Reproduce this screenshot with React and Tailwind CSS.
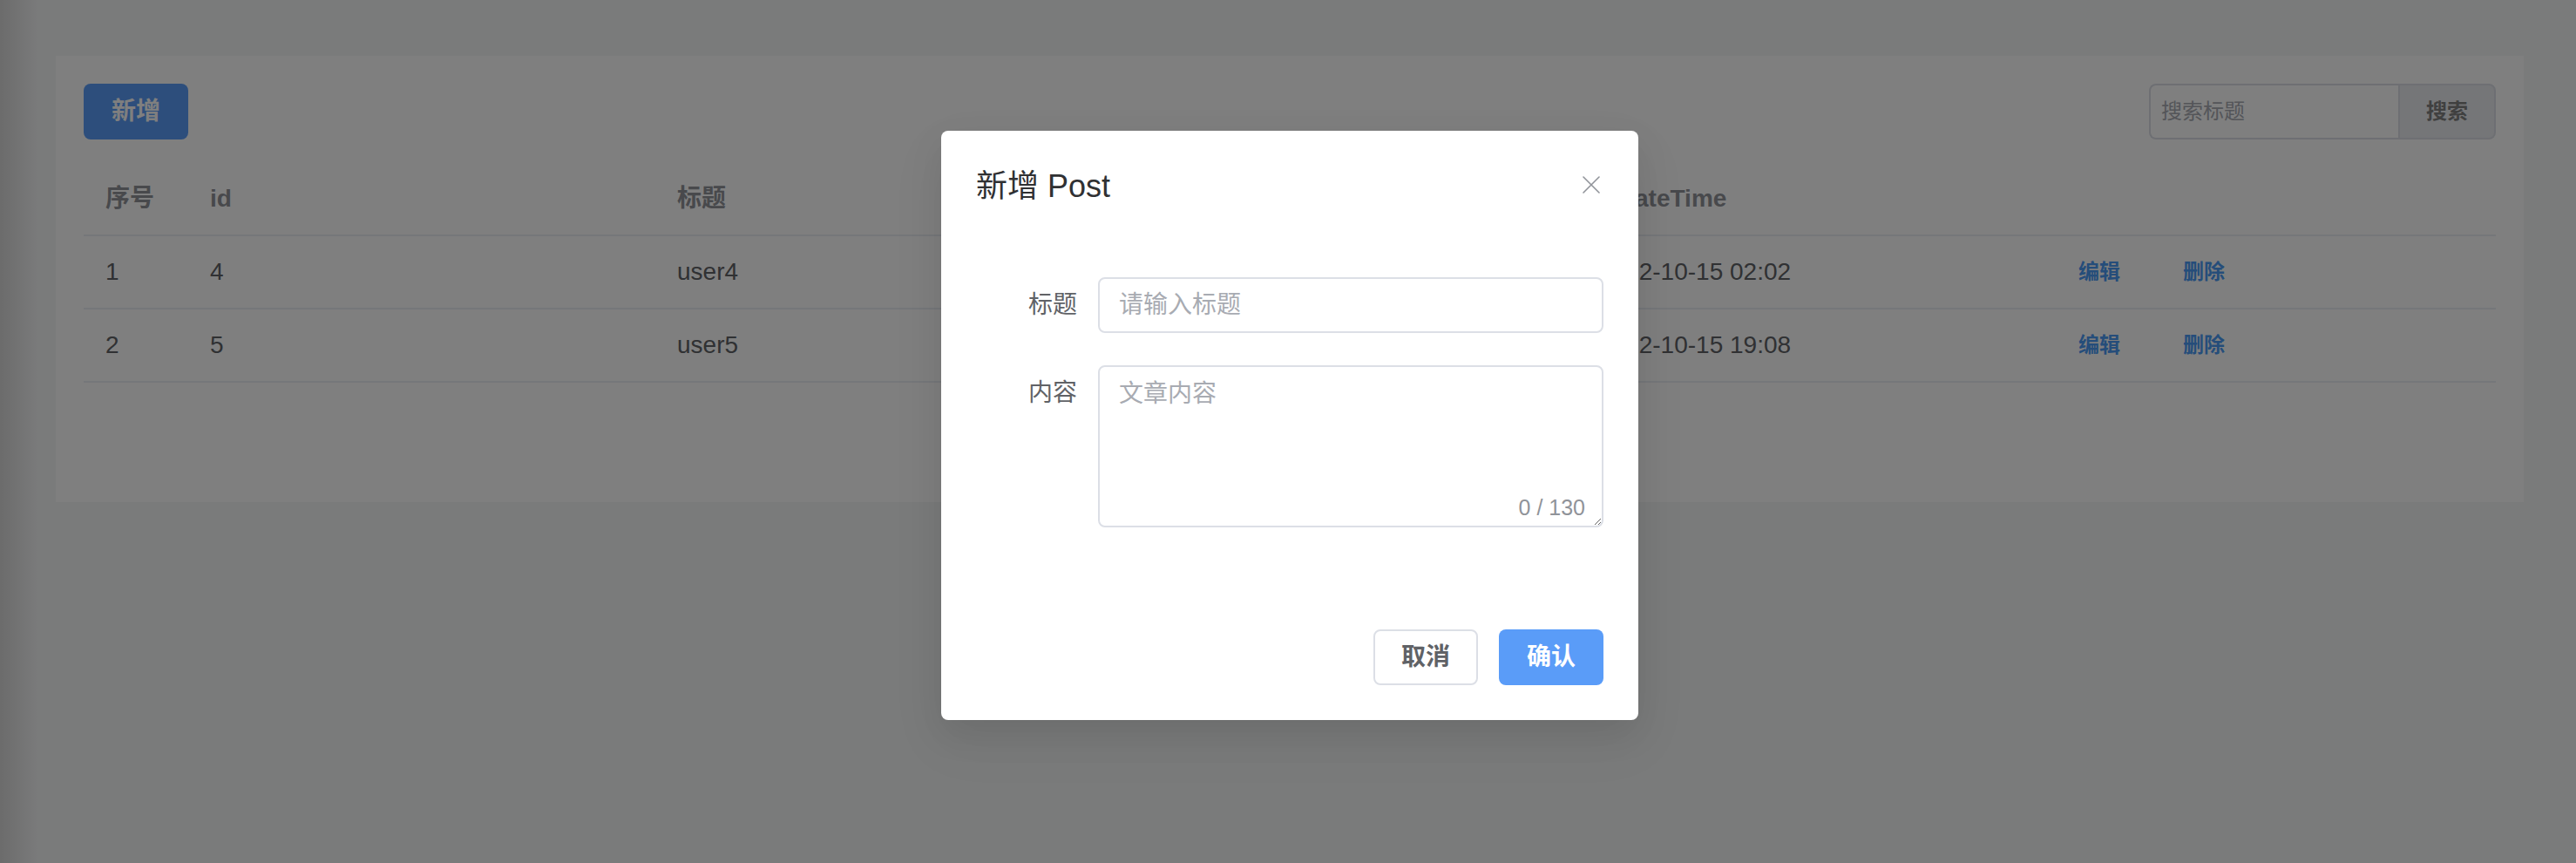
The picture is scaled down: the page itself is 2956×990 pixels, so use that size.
import React from "react";

const rows = [
  { no: 1, id: 4, title: "user4", content: "content4", createTime: "2022-10-15 02:02" },
  { no: 2, id: 5, title: "user5", content: "content5", createTime: "2022-10-15 19:08" },
];

const gridCols = "grid grid-cols-[120px_536px_536px_521px_551px_1fr]";

// thin X used by the dialog header
function CloseIcon() {
  return (
    <svg viewBox="0 0 20 20" className="h-[20px] w-[20px]" fill="none" stroke="#909399" strokeWidth="1.6" strokeLinecap="round">
      <path d="M1 1 L19 19 M19 1 L1 19" />
    </svg>
  );
}

function PostTable() {
  return (
    <div className="mt-[27px] text-[28px]">
      {/* header */}
      <div className={`${gridCols} h-[84px] items-center border-b-2 border-[#ebeef5] font-bold text-[#909399]`}>
        <div className="pl-[25px]">序号</div>
        <div className="pl-[25px]">id</div>
        <div className="pl-[25px]">标题</div>
        <div className="pl-[25px]">内容</div>
        <div className="pl-[25px]">createTime</div>
        <div className="pl-[25px]"></div>
      </div>

      {rows.map((row) => (
        <div key={row.id} className={`${gridCols} h-[84px] items-center border-b-2 border-[#ebeef5] text-[#606266]`}>
          <div className="pl-[25px]">{row.no}</div>
          <div className="pl-[25px]">{row.id}</div>
          <div className="pl-[25px]">{row.title}</div>
          <div className="pl-[25px]">{row.content}</div>
          <div className="pl-[25px]">{row.createTime}</div>
          <div className="flex items-center gap-[72px] pl-[25px] text-[24px] font-semibold text-[#4a9af5]">
            <span>编辑</span>
            <span>删除</span>
          </div>
        </div>
      ))}
    </div>
  );
}

function PostDialog() {
  return (
    <div className="absolute left-[1080px] top-[150px] flex h-[676px] w-[800px] flex-col rounded-[8px] bg-white px-[40px] pb-[40px] pt-[40px] shadow-[0_24px_64px_8px_rgba(0,0,0,0.04),0_16px_40px_rgba(0,0,0,0.08)]">
      <div className="flex items-start justify-between">
        <h2 className="text-[36px] leading-[48px] text-[#303133]">新增 Post</h2>
        <button className="mr-[4px] mt-[12px]">
          <CloseIcon />
        </button>
      </div>

      {/* form */}
      <div className="mt-[80px]">
        <div className="flex">
          <label className="w-[140px] pr-[24px] text-right text-[28px] leading-[64px] text-[#606266]">标题</label>
          <input
            type="text"
            placeholder="请输入标题"
            className="h-[64px] w-[580px] rounded-[8px] border-2 border-[#dcdfe6] px-[22px] text-[28px] text-[#606266] outline-none placeholder:text-[#a8abb2]"
          />
        </div>
        <div className="mt-[37px] flex">
          <label className="w-[140px] pr-[24px] text-right text-[28px] leading-[64px] text-[#606266]">内容</label>
          <div className="relative">
            <textarea
              placeholder="文章内容"
              className="block h-[186px] w-[580px] rounded-[8px] border-2 border-[#dcdfe6] px-[22px] py-[10px] text-[28px] leading-[42px] text-[#606266] outline-none placeholder:text-[#a8abb2]"
            />
            <span className="absolute bottom-[7px] right-[21px] bg-white text-[25px] leading-[32px] text-[#909399]">0 / 130</span>
          </div>
        </div>
      </div>

      {/* footer */}
      <div className="mt-auto flex justify-end gap-[24px]">
        <button className="h-[64px] w-[120px] rounded-[8px] border-2 border-[#dcdfe6] bg-white text-[28px] font-semibold text-[#606266]">
          取消
        </button>
        <button className="h-[64px] w-[120px] rounded-[8px] bg-[#5a9cf8] text-[28px] font-semibold text-white">
          确认
        </button>
      </div>
    </div>
  );
}

export default function App() {
  return (
    <div className="relative h-[990px] w-full overflow-hidden bg-[linear-gradient(to_right,#d8d8d8,#f5f6f7_44px)] font-['Liberation_Sans','Noto_Sans_CJK_SC',sans-serif]">
      {/* page card */}
      <div className="ml-[64px] mt-[64px] h-[512px] w-[2832px] bg-white px-[32px] pt-[32px]">
        <div className="flex items-center justify-between">
          <button className="h-[64px] w-[120px] rounded-[8px] bg-[#5a9cf8] text-[28px] font-semibold text-white">新增</button>
          <div className="flex h-[64px] w-[398px]">
            <input
              type="text"
              placeholder="搜索标题"
              className="h-[64px] w-[286px] rounded-l-[8px] border-2 border-r-0 border-[#dcdfe6] bg-white px-[12px] text-[24px] outline-none placeholder:text-[#a8abb2]"
            />
            <button className="h-[64px] w-[112px] rounded-r-[8px] border-2 border-[#dcdfe6] bg-[#ebedf0] text-[24px] font-bold text-[#808080]">
              搜索
            </button>
          </div>
        </div>
        <PostTable />
      </div>

      {/* modal mask */}
      <div className="absolute inset-0 bg-black/50" />
      <PostDialog />
    </div>
  );
}
